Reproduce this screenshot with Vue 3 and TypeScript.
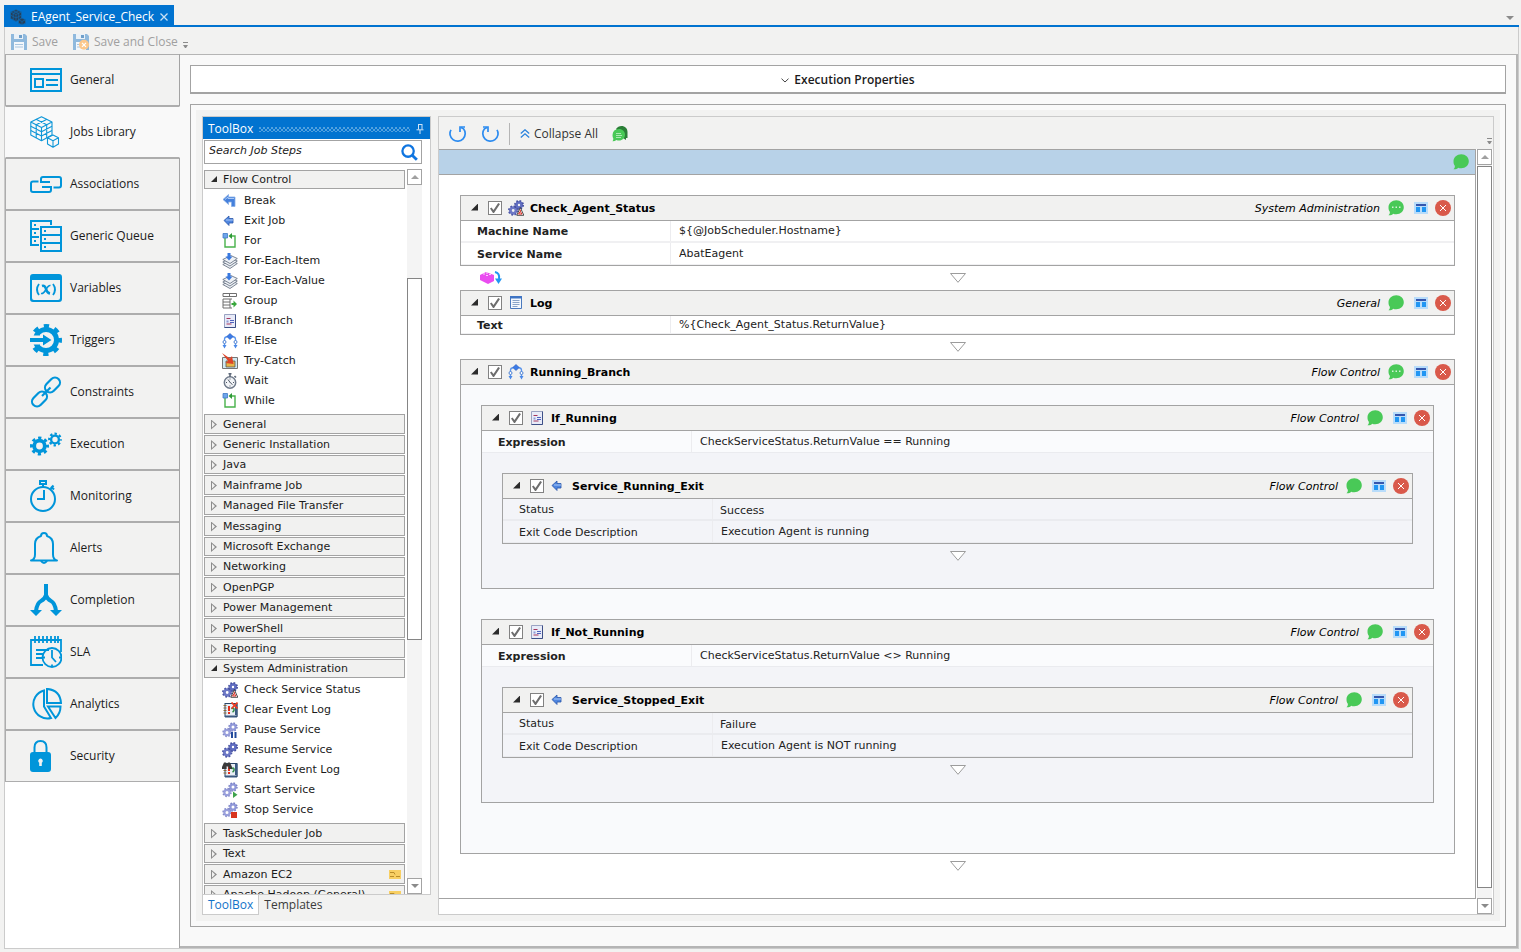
<script setup lang="ts">
import { h, ref, type FunctionalComponent, type VNode } from 'vue'

interface Prop {
  label: string
  value: string
  options?: string[]
}
interface Step {
  name: string
  icon: string
  category: string
  noted?: boolean
  optionalProps?: boolean
  compact?: boolean
  output?: boolean
  props?: Prop[]
  steps?: Step[]
}
interface Group {
  title: string
  licensed?: boolean
  items?: { label: string; icon: string }[]
}

const sections = [
  'General', 'Jobs Library', 'Associations', 'Generic Queue', 'Variables', 'Triggers', 'Constraints',
  'Execution', 'Monitoring', 'Alerts', 'Completion', 'SLA', 'Analytics', 'Security',
]
const current = ref('Jobs Library')
const iconId = (label: string) => '#nav-' + label.toLowerCase().replace(' ', '-')

const groups: Group[] = [
  {
    title: 'Flow Control',
    items: [
      { label: 'Break', icon: 'break' },
      { label: 'Exit Job', icon: 'exit' },
      { label: 'For', icon: 'loop' },
      { label: 'For-Each-Item', icon: 'stack' },
      { label: 'For-Each-Value', icon: 'stack' },
      { label: 'Group', icon: 'group' },
      { label: 'If-Branch', icon: 'ifbranch' },
      { label: 'If-Else', icon: 'ifelse' },
      { label: 'Try-Catch', icon: 'trycatch' },
      { label: 'Wait', icon: 'wait' },
      { label: 'While', icon: 'loop' },
    ],
  },
  { title: 'General' },
  { title: 'Generic Installation' },
  { title: 'Java' },
  { title: 'Mainframe Job' },
  { title: 'Managed File Transfer' },
  { title: 'Messaging' },
  { title: 'Microsoft Exchange' },
  { title: 'Networking' },
  { title: 'OpenPGP' },
  { title: 'Power Management' },
  { title: 'PowerShell' },
  { title: 'Reporting' },
  {
    title: 'System Administration',
    items: [
      { label: 'Check Service Status', icon: 'svc-check' },
      { label: 'Clear Event Log', icon: 'log-clear' },
      { label: 'Pause Service', icon: 'svc-pause' },
      { label: 'Resume Service', icon: 'svc-resume' },
      { label: 'Search Event Log', icon: 'log-search' },
      { label: 'Start Service', icon: 'svc-start' },
      { label: 'Stop Service', icon: 'svc-stop' },
    ],
  },
  { title: 'TaskScheduler Job' },
  { title: 'Text' },
  { title: 'Amazon EC2', licensed: true },
  { title: 'Apache Hadoop (General)', licensed: true },
]

const exitStep = (name: string, status: string, text: string): Step => ({
  name,
  icon: 'exit',
  category: 'Flow Control',
  optionalProps: true,
  props: [
    { label: 'Status', value: status, options: ['Success', 'Failure'] },
    { label: 'Exit Code Description', value: text },
  ],
})

const workflow: Step[] = [
  {
    name: 'Check_Agent_Status',
    icon: 'svc-check',
    category: 'System Administration',
    noted: true,
    output: true,
    props: [
      { label: 'Machine Name', value: '${@JobScheduler.Hostname}' },
      { label: 'Service Name', value: 'AbatEagent' },
    ],
  },
  {
    name: 'Log',
    icon: 'log',
    category: 'General',
    compact: true,
    props: [{ label: 'Text', value: '%{Check_Agent_Status.ReturnValue}' }],
  },
  {
    name: 'Running_Branch',
    icon: 'ifelse',
    category: 'Flow Control',
    noted: true,
    steps: [
      {
        name: 'If_Running',
        icon: 'ifbranch',
        category: 'Flow Control',
        props: [{ label: 'Expression', value: 'CheckServiceStatus.ReturnValue == Running' }],
        steps: [exitStep('Service_Running_Exit', 'Success', 'Execution Agent is running')],
      },
      {
        name: 'If_Not_Running',
        icon: 'ifbranch',
        category: 'Flow Control',
        props: [{ label: 'Expression', value: 'CheckServiceStatus.ReturnValue <> Running' }],
        steps: [exitStep('Service_Stopped_Exit', 'Failure', 'Execution Agent is NOT running')],
      },
    ],
  },
]

const icon = (id: string, size = '0 0 16 16', cls = 'ico'): VNode =>
  h('svg', { class: cls, viewBox: size, 'aria-hidden': 'true' }, [h('use', { href: '#' + id })])

const field = (step: Step, p: Prop): VNode[] => {
  const id = `${step.name}-${p.label}`.replace(/\s/g, '-')
  const editor = p.options
    ? h('select', { id, value: p.value }, p.options.map((o) => h('option', { value: o, selected: o === p.value }, o)))
    : h('input', { id, type: 'text', value: p.value, spellcheck: 'false' })
  return [h('label', { for: id }, p.label), editor]
}

const StepCard: FunctionalComponent<{ step: Step; depth: number }> = ({ step, depth }) =>
  h('section', { class: ['step', 'depth-' + depth] }, [
    h('header', { class: 'step-head' }, [
      h('button', { class: 'fold', type: 'button', 'aria-label': 'Collapse ' + step.name }),
      h('input', { type: 'checkbox', checked: true, 'aria-label': 'Enable ' + step.name }),
      icon(step.icon),
      h('h3', step.name),
      h('em', step.category),
      h('button', { type: 'button', 'aria-label': 'Comments' }, [icon(step.noted ? 'bubble-dots' : 'bubble')]),
      h('button', { class: 'layout', type: 'button', 'aria-label': 'Layout' }, [icon('layout')]),
      h('button', { type: 'button', 'aria-label': 'Delete' }, [icon('remove')]),
    ]),
    step.props &&
      h(
        'div',
        { class: ['props', { compact: step.compact, optional: step.optionalProps }] },
        step.props.map((p) => h('div', { class: 'prop' }, field(step, p))),
      ),
    step.steps &&
      h('div', { class: 'children' }, step.steps.map((s) => [
        h(StepCard, { step: s, depth: depth + 1 }),
        depth === 1 && h('div', { class: 'connector' }, [icon('down', '0 0 18 10', 'down')]),
      ])),
  ])
StepCard.props = ['step', 'depth']
</script>

<template>
  <div class="window">
    <svg class="defs" aria-hidden="true">
      <defs>
        <g id="bluegear">
          <circle cx="5.2" cy="10.5" r="2.800" fill="none" stroke="#6d78c6" stroke-width="2.800" />
          <circle cx="5.2" cy="10.5" r="4.400" fill="none" stroke="#4d58a8" stroke-width="1.600" stroke-dasharray="1.800 1.655" />
          <circle cx="11" cy="5" r="2.600" fill="none" stroke="#5f6cc0" stroke-width="2.800" />
          <circle cx="11" cy="5" r="4.200" fill="none" stroke="#434e9e" stroke-width="1.600" stroke-dasharray="1.700 1.600" />
        </g>
        <g id="palegear">
          <circle cx="5" cy="10.5" r="2.6" fill="none" stroke="#9aa0dc" stroke-width="2.2" />
          <circle cx="5" cy="10.5" r="4" fill="none" stroke="#858ccb" stroke-width="1.4" stroke-dasharray="1.6 1.54" />
          <circle cx="11" cy="5" r="2.6" fill="none" stroke="#8f97d8" stroke-width="2.2" />
          <circle cx="11" cy="5" r="4" fill="none" stroke="#7880c6" stroke-width="1.4" stroke-dasharray="1.6 1.54" />
        </g>
        <g id="book">
          <rect x="3" y="1.500" width="12" height="13" fill="#e9eef5" stroke="#2b4668" />
          <path d="M13 2v12.500h2.500V2zM3 13.500h12v2H3z" fill="#3c5a82" />
          <path d="M1.500 3.500h3M1.500 6h3M1.500 8.500h3M1.500 11h3" stroke="#8a6a3c" />
          <path d="M6 4h2v5H6zM6 10h2v2H6z" fill="#e3301c" />
          <path d="M9.500 7q2-2 2.500 0t-1.500 3" fill="none" stroke="#2f8b45" stroke-width="1.500" />
        </g>
      </defs>

      <symbol id="nav-general" viewBox="0 0 32 32">
        <g fill="none" stroke="#0095da" stroke-width="2"><path d="M1 5h30v22H1zM1 10h30M5 15h8v8H5zM16 16h12M16 21h12" /></g>
      </symbol>
      <symbol id="nav-jobs-library" viewBox="0 0 32 32">
        <g fill="none" stroke="#0f97d8" stroke-width="1.100" stroke-linejoin="round">
          <path d="M11.500.7 22 6v13l-10.500 5.800L.8 19V6zM.8 6l10.700 5.500L22 6M11.500 11.500v13.300" />
          <path d="M6 3.300l10.700 5.500v13.200M17 3.300 6.200 8.800v13.200M.8 10.300l10.700 5.500L22 10.300M.8 14.600l10.700 5.500L22 14.600" />
          <path d="m23 19 5.500 2.700V28L23 31.300 17.500 28v-6.300zM17.500 21.700l5.500 3 5.500-3M23 24.700v6.600" />
        </g>
      </symbol>
      <symbol id="nav-associations" viewBox="0 0 32 32">
        <g fill="none" stroke="#0095da" stroke-width="2"><path d="M8.500 13.500H3q-2 0-2 2V22q0 2 2 2h16q2 0 2-2v-3h-9M23.500 19.500H29q2 0 2-2V11q0-2-2-2H13q-2 0-2 2v3h9" /></g>
      </symbol>
      <symbol id="nav-generic-queue" viewBox="0 0 32 32">
        <g fill="none" stroke="#0095da" stroke-width="2">
          <path d="M21 5V1H1v24h8M1 9h8M1 17h8M11 7h20v24H11zM11 15h20M11 23h20" />
        </g>
        <path d="M4 4h2v2H4zM4 12h2v2H4zM4 20h2v2H4zM14 10h2v2h-2zM14 18h2v2h-2zM14 26h2v2h-2z" fill="#0095da" />
      </symbol>
      <symbol id="nav-variables" viewBox="0 0 32 32">
        <path d="M3 2h26q3 0 3 3v22q0 3-3 3H3q-3 0-3-3V5q0-3 3-3zM2 8v18q0 2 2 2h24q2 0 2-2V8z" fill="#0095da" fill-rule="evenodd" />
        <g fill="none" stroke="#0095da" stroke-width="1.800">
          <path d="M9 12q-4 5.500 0 11M23 12q4 5.500 0 11" />
          <path d="M12 14q3-1 4 3t4 4.500" stroke-width="2.600" /><path d="M20.500 13.500q-2-.5-4.500 4t-5 4" stroke-width="1.600" />
        </g>
      </symbol>
      <symbol id="nav-triggers" viewBox="0 0 32 32">
        <circle cx="16" cy="16" r="13.800" fill="none" stroke="#0095da" stroke-width="4.400" stroke-dasharray="5.200 5.638" stroke-dashoffset="2.600" />
        <circle cx="16" cy="16" r="10.500" fill="none" stroke="#0095da" stroke-width="5" />
        <path d="M0 11.500h9v9H0z" fill="#f2f2f1" />
        <path d="M0 14h13v-3.500l8.500 5.500-8.500 5.500V18H0z" fill="#0095da" />
      </symbol>
      <symbol id="nav-constraints" viewBox="0 0 32 32">
        <g fill="none" stroke="#0095da" stroke-width="2.200">
          <rect x="-7" y="-5" width="17" height="10" rx="5" transform="translate(22.500 9) rotate(-45) translate(-1.500 0)" />
          <rect x="-10" y="-5" width="17" height="10" rx="5" transform="translate(9.500 23) rotate(-45) translate(1.500 0)" />
          <path d="m12 20 8.500-8.500" />
        </g>
      </symbol>
      <symbol id="nav-execution" viewBox="0 0 32 32">
        <g fill="none" stroke="#0095da">
          <circle cx="9.500" cy="18" r="5.300" stroke-width="3.800" /><circle cx="9.500" cy="18" r="8" stroke-width="3" stroke-dasharray="3.200 3.083" stroke-dashoffset="1.600" />
          <circle cx="25" cy="11.500" r="3.900" stroke-width="2.400" /><circle cx="25" cy="11.500" r="5.800" stroke-width="2.200" stroke-dasharray="2.400 2.155" stroke-dashoffset="1.200" />
        </g>
      </symbol>
      <symbol id="nav-monitoring" viewBox="0 0 32 32">
        <g fill="none" stroke="#0095da" stroke-width="2">
          <circle cx="13" cy="19" r="12" /><path d="M10 1h6v3h-6zM13 4v3M14 10v9H7M21 6.500l3 3M20.500 9l3-3.500" />
        </g>
      </symbol>
      <symbol id="nav-alerts" viewBox="0 0 32 32">
        <path d="M1 28.500q4-1 4-6V12q0-6 6-8 0-3 3-3t3 3q6 2 6 8v10.500q0 5 4 6zM11 29q3 4 6 0" fill="none" stroke="#0095da" stroke-width="2" stroke-linejoin="round" />
      </symbol>
      <symbol id="nav-completion" viewBox="0 0 32 32">
        <path d="M16 0v12M16 11q-1 4-5 6t-5 10M16 11q1 4 5 6t5 10" fill="none" stroke="#0095da" stroke-width="4" />
        <path d="M0 26h12l-6 6zM20 26h12l-6 6z" fill="#0095da" />
      </symbol>
      <symbol id="nav-sla" viewBox="0 0 32 32">
        <g fill="none" stroke="#0095da" stroke-width="1.800">
          <path d="M13 29H1V4h30v12M5 0v7M9 0v7M13 0v7M17 0v7M21 0v7M25 0v7M28 0v7M6 14h13M6 18h8M6 22h7" />
          <circle cx="22" cy="21.500" r="9.500" /><path d="M22 14v7.500l4 4.500M22 28.500v2M29 21.500h2M13 21.500h2" />
        </g>
      </symbol>
      <symbol id="nav-analytics" viewBox="0 0 32 32">
        <g fill="none" stroke="#0095da" stroke-width="2">
          <path d="M14 2.500v16l7 11.500A14 14 0 1 1 14 2.500zM17 .9q13 1 14 14.100H17zM18 18.500h12.500q0 7-5 11.500z" />
        </g>
      </symbol>
      <symbol id="nav-security" viewBox="0 0 32 32">
        <path d="M4.500 13V7.500q0-6.500 6-6.500t6 6.500V13" fill="none" stroke="#0095da" stroke-width="2" />
        <rect y="12" width="21" height="20" rx="3" fill="#0095da" />
        <path d="M10.500 18.500a2.400 2.400 0 0 1 1.300 4.300V26h-2.600v-3.200a2.400 2.400 0 0 1 1.300-4.300z" fill="#f2f2f1" />
      </symbol>

      <symbol id="cubes" viewBox="0 0 16 16">
        <g fill="#24405c" stroke="#0f6cb4" stroke-width=".7">
          <path d="M6 .5 11.500 3v6.500L6 12.500.5 9.500V3z" /><path d="m12 9 3.500 1.800v3.400L12 15.800l-3.500-1.600v-3.400z" />
          <path d="M.5 3 6 5.500 11.500 3M6 5.500v7M.5 6.200 6 8.900l5.500-2.700M3.200 1.800l5.500 2.500v6.600M8.700 1.800 3.200 4.300v6.600M8.500 10.800l3.500 1.700 3.500-1.700M12 12.500v3" fill="none" />
        </g>
      </symbol>
      <symbol id="save" viewBox="0 0 16 16">
        <path d="M0 0h14l2 2v14H0z" fill="#8fb9dd" /><path d="M3 0h9v5H3z" fill="#e9f1f8" /><path d="M8 1h3v3H8z" fill="#6f9fca" />
        <path d="M3 8h10v8H3z" fill="#f3f7fb" /><path d="M4 10.500h8M4 13h8" stroke="#a9c6e0" />
      </symbol>
      <symbol id="save-close" viewBox="0 0 16 16">
        <use href="#save" /><circle cx="11" cy="10.800" r="5" fill="#fcc88c" /><path d="m9 8.800 4 4m0-4-4 4" stroke="#fff" stroke-width="1.200" />
      </symbol>

      <symbol id="break" viewBox="0 0 16 16">
        <path d="M1 6.500 6.500 1.500V4H13v9.500H9.500V9h-3v2.500z" fill="#4580dc" stroke="#88aee6" stroke-width=".8" /><path d="M3 6.500 6 4v1.500h6" fill="none" stroke="#a9c8f5" />
      </symbol>
      <symbol id="exit" viewBox="0 0 16 16">
        <path d="M2 7.500 7 3v2.500h4v4.500H7v2.500z" fill="#4f86e0" stroke="#2a55a8" stroke-width=".8" /><path d="M4 7h7" stroke="#a9c8f5" />
      </symbol>
      <symbol id="loop" viewBox="0 0 16 16">
        <path d="M3 5v9h10V3H9" fill="none" stroke="#49b24b" stroke-width="1.400" /><path d="M10 0v6L6.500 3z" fill="#2f9a38" /><path d="M1 .5h4.500V5H1z" fill="#6ea5ea" stroke="#3f78c6" stroke-width=".8" />
      </symbol>
      <symbol id="stack" viewBox="0 0 16 16">
        <g fill="#eef1f5" stroke="#6c7788" stroke-width=".9">
          <path d="m.8 11.500 8-4 6.500 3-7.300 5z" /><path d="m.8 9 8-4 6.500 3-7.300 5z" /><path d="m.8 6.500 8-4 6.500 3-7.300 5z" />
        </g>
        <path d="M5.500 0h3v3.500h2L7 7.500 3.500 3.500h2z" fill="#3979e0" />
      </symbol>
      <symbol id="group" viewBox="0 0 16 16">
        <path d="M1 .5h13.500v3H1zM7.500.5v3M1 6h7v9H1zM1 9h7M1 12h7M8 6h2M8 15h2" fill="#fff" stroke="#6f6f6f" /><path d="M9.500 10h2V7.500l3.500 3.500-3.500 3.500V12h-2z" fill="#39a83c" />
      </symbol>
      <symbol id="ifbranch" viewBox="0 0 16 16">
        <path d="M2.500 1.500h11v13h-11z" fill="#e8ebf8" stroke="#9aa3c2" /><path d="M13.500 1.500v13h-11" fill="none" stroke="#3d4f86" />
        <path d="M4.500 5.500h4M4.500 11h5" stroke="#a5365c" /><path d="M8 7.500h4M8 9.500h4" stroke="#5063c0" stroke-width="1.200" /><path d="M4.500 7.500h2v2h-2z" fill="#8e9ad6" />
      </symbol>
      <symbol id="ifelse" viewBox="0 0 16 16">
        <path d="M2.500 12V6q0-2 3-2.500M13.500 12V6q0-2-3-2.500" fill="none" stroke="#5a95ec" stroke-width="1.300" />
        <path d="m8 .5 3.200 3L8 6.500l-3.200-3z" fill="#3b7be8" stroke="#2458b8" stroke-width=".6" />
        <circle cx="2.500" cy="9" r="1.500" fill="#fff" stroke="#4f83d3" /><circle cx="13.500" cy="9" r="1.500" fill="#fff" stroke="#4f83d3" />
        <path d="M.5 12h4l-2 3.500zM11.500 12h4l-2 3.500z" fill="#4a88e8" />
      </symbol>
      <symbol id="trycatch" viewBox="0 0 16 16">
        <path d="M.5 4.500h15v11H.5z" fill="#cfe9f2" stroke="#757575" /><path d="M4 8h9v6H4z" fill="#e7b64a" stroke="#555" stroke-width=".8" />
        <path d="M0 0 8 5.500 10 3l1.500 8-8-1 2.500-2z" fill="#dd4429" />
      </symbol>
      <symbol id="wait" viewBox="0 0 16 16">
        <circle cx="8" cy="9.500" r="5.700" fill="#f2f4f7" stroke="#6f7a8a" stroke-width="1.500" /><path d="M6.500.8h3M8 1v3M12.500 3l1.500 1.500" stroke="#5d6878" stroke-width="1.600" />
        <path d="M6 6.500 8.500 10l2 1.500M8 5.500v1M8 12.500v1M4 9.500h1M11 9.500h1" fill="none" stroke="#3a4454" stroke-width=".9" />
      </symbol>
      <symbol id="log" viewBox="0 0 16 16">
        <path d="M2.500 1.500h11v12h-11z" fill="#f4f8fd" stroke="#4a79bd" /><path d="M2 1h12v2.500H2z" fill="#3f74c4" /><path d="M4.500 5.500h7M4.500 7.500h7M4.500 9.500h7M4.500 11.500h5" stroke="#8aa4c8" />
      </symbol>
      <symbol id="svc-check" viewBox="0 0 16 16">
        <use href="#bluegear" /><path d="M12.300 7.500 8.800 15.300h7z" fill="#fff" stroke="#222" stroke-width=".8" /><path d="M12.300 9.800v2M10.500 14h3.500l-1.700-2.500z" fill="none" stroke="#d82a20" />
      </symbol>
      <symbol id="svc-resume" viewBox="0 0 16 16"><use href="#bluegear" /></symbol>
      <symbol id="svc-pause" viewBox="0 0 16 16"><use href="#palegear" /><path d="M9 10h2v6H9zM12.500 10h2v6h-2z" fill="#234a9c" /></symbol>
      <symbol id="svc-start" viewBox="0 0 16 16"><use href="#palegear" /><path d="m11 9.500 4.500 3.200L11 16z" fill="#3da24a" /></symbol>
      <symbol id="svc-stop" viewBox="0 0 16 16"><use href="#palegear" /><path d="M9 10h6v6H9z" fill="#d8341d" /></symbol>
      <symbol id="log-clear" viewBox="0 0 16 16"><use href="#book" /><path d="m9.500.5 6 6m0-6-6 6" stroke="#ee3b22" stroke-width="1.700" /></symbol>
      <symbol id="log-search" viewBox="0 0 16 16">
        <use href="#book" /><path d="M0 5 2 .5h2L5 2l1-1.500h2L10 5v2H6.500V4.500h-2V7H0z" fill="#3a3a3a" />
      </symbol>

      <symbol id="bubble" viewBox="0 0 16 16"><path d="M8.300.3c4.300 0 7.500 3 7.500 6.900s-3.200 7-7.500 7c-1.200 0-2.200-.1-3-.5-1.300 1.300-3 1.800-4.800 1.600 1-1 1.600-2.300 1.300-3.600C.8 10.500.5 8.900.5 7.200.5 3.300 4 .3 8.300.3z" fill="#49c957" /></symbol>
      <symbol id="bubble-dots" viewBox="0 0 16 16">
        <use href="#bubble" /><path d="M4 6.500h1.500V8H4zM7.500 6.500H9V8H7.500zM11 6.500h1.500V8H11z" fill="#d4f4d7" />
      </symbol>
      <symbol id="bubbles" viewBox="0 0 16 16">
        <path d="M9.500 0C13 0 15.500 2.500 15.500 6v6h-1.500V14L11 12 4 3Q6 0 9.500 0z" fill="#2b7f37" />
        <path d="M7 3c3.500 0 6 2.500 6 5.700S10.500 14.500 7 14.500q-1.500 0-2.500-.5Q2.500 15.500.5 15.300 1.500 14 1.300 12.500.5 11 .5 9 .8 3 7 3z" fill="#49c957" /><path d="M4 7.500h5M4 9.500h6M4 11.500h5" stroke="#c5efca" stroke-width=".8" />
      </symbol>
      <symbol id="layout" viewBox="0 0 16 16">
        <path d="M1 2h14v12H1z" fill="#b8dcfa" /><path d="M3 4h10v2H3z" fill="#3556ad" /><path d="M3 7h4v5H3zM9 7h4v5H9z" fill="#2196f3" />
      </symbol>
      <symbol id="remove" viewBox="0 0 16 16"><circle cx="8" cy="8" r="8" fill="#d9594a" /><path d="m5 5 6 6m0-6-6 6" stroke="#fff" stroke-width="1" /></symbol>
      <symbol id="down" viewBox="0 0 18 10"><path d="M1.500.5h15L9 9.300z" fill="#fff" stroke="#9c9c9c" /></symbol>
    </svg>

    <header class="tabstrip">
      <div class="doc-tab">
        <svg class="ico"><use href="#cubes" /></svg>
        <span>EAgent_Service_Check</span>
        <button type="button" aria-label="Close tab">
          <svg viewBox="0 0 8 8"><path d="m.5.500 7 7m0-7-7 7" stroke="#c9e0f4" stroke-width="1.300" /></svg>
        </button>
      </div>
      <button class="tab-menu" type="button" aria-label="Open documents"><i class="tri-down"></i></button>
    </header>

    <div class="frame">
      <div class="toolbar">
        <button type="button" disabled><svg class="ico"><use href="#save" /></svg>Save</button>
        <button type="button" disabled><svg class="ico"><use href="#save-close" /></svg>Save and Close</button>
        <i class="overflow"></i>
      </div>

      <div class="body">
        <nav>
          <button
            v-for="s in sections" :key="s" type="button"
            :class="{ selected: s === current }" @click="current = s"
          >
            <svg><use :href="iconId(s)" /></svg>{{ s }}
          </button>
        </nav>

        <main>
          <button class="exec" type="button">
            <svg viewBox="0 0 8 5"><path d="m.5.700 3.500 3.300L7.500.700" fill="none" stroke="#444" /></svg>Execution Properties
          </button>

          <div class="box">
            <div class="workspace">
              <aside>
                <div class="toolbox">
                  <h2>ToolBox<i class="grip"></i>
                    <svg viewBox="0 0 8 10"><path d="M2.500 0v5.500M6 0v5.500M2 .5h4M.5 5.800h7M4 6v4" fill="none" stroke="#cfe3f5" /></svg>
                  </h2>
                  <div class="search">
                    <input type="text" placeholder="Search Job Steps" aria-label="Search Job Steps" />
                    <svg viewBox="0 0 18 18"><circle cx="7.500" cy="7.500" r="6" fill="none" stroke="#0f75e0" stroke-width="2.400" /><path d="m11.800 11.800 5 5" stroke="#0f75e0" stroke-width="3" /></svg>
                  </div>
                  <div class="tree-area">
                    <div class="tree">
                      <div v-for="g in groups" :key="g.title" class="group">
                        <button class="group-head" :class="{ open: g.items }" type="button">
                          <i class="fold-mark"></i>{{ g.title }}
                          <svg v-if="g.licensed" class="card" viewBox="0 0 12 9"><path d="M0 0h12v9H0z" fill="#f8cf63" /><path d="M1 2.500h4l1 2M1 6.500h4M7 6.500h4" fill="none" stroke="#b98d2a" /></svg>
                        </button>
                        <ul v-if="g.items">
                          <li v-for="i in g.items" :key="i.label"><svg class="ico"><use :href="'#' + i.icon" /></svg>{{ i.label }}</li>
                        </ul>
                      </div>
                    </div>
                    <div class="scroll">
                      <button type="button" aria-label="Scroll up"><i class="tri-up"></i></button>
                      <div class="track middle"><div class="thumb"></div></div>
                      <button type="button" aria-label="Scroll down"><i class="tri-down"></i></button>
                    </div>
                  </div>
                </div>
                <div class="side-tabs">
                  <button class="on" type="button">ToolBox</button><button type="button">Templates</button>
                </div>
              </aside>

              <section class="designer">
                <div class="design-tools">
                  <button type="button" aria-label="Undo"><svg viewBox="0 0 18 18"><path d="M2 4.800A7.600 7.600 0 1 0 14.500 3.800L12 2.500" fill="none" stroke="#2d8cf0" stroke-width="1.700" /><path d="M11 7V2H16" fill="none" stroke="#2d8cf0" stroke-width="1.700" /></svg></button>
                  <button type="button" aria-label="Redo"><svg viewBox="0 0 18 18"><path d="M16 4.800A7.600 7.600 0 1 1 3.500 3.800L6 2.500" fill="none" stroke="#2d8cf0" stroke-width="1.700" /><path d="M7 7V2H2" fill="none" stroke="#2d8cf0" stroke-width="1.700" /></svg></button>
                  <i class="divider"></i>
                  <button class="collapse" type="button">
                    <svg viewBox="0 0 10 9"><path d="M.8 4.500 5 .8l4.200 3.700M.8 8.500 5 4.800l4.200 3.700" fill="none" stroke="#2a82dc" stroke-width="1.300" /></svg>Collapse All
                  </button>
                  <button type="button" aria-label="Comments"><svg class="ico"><use href="#bubbles" /></svg></button>
                  <i class="overflow"></i>
                </div>
                <div class="design-area">
                  <div class="sheet">
                    <div class="band"><button type="button" aria-label="Job comments"><svg class="ico"><use href="#bubble" /></svg></button></div>
                    <div class="canvas">
                      <template v-for="s in workflow" :key="s.name">
                        <StepCard :step="s" :depth="0" />
                        <div class="connector">
                          <svg v-if="s.output" class="brick" viewBox="0 0 22 14">
                            <path d="M0 4 6 1l8 3v6l-6 3-8-4z" fill="#ea4cf0" /><path d="M3 3h2M6 2h2M6 4.500h2M9 3.500h2" stroke="#fbd3fc" /><path d="M15 1q5 1 4 7" fill="none" stroke="#2196f3" stroke-width="2" /><path d="M15 7.500h7L18.500 13z" fill="#2196f3" />
                          </svg>
                          <svg class="down"><use href="#down" /></svg>
                        </div>
                      </template>
                    </div>
                  </div>
                  <div class="scroll">
                    <button type="button" aria-label="Scroll up"><i class="tri-up"></i></button>
                    <div class="track top"><div class="thumb"></div></div>
                    <button type="button" aria-label="Scroll down"><i class="tri-down"></i></button>
                  </div>
                </div>
              </section>
            </div>
          </div>
        </main>
      </div>
    </div>
  </div>
</template>

<style>
body {
  margin: 0;
}
</style>

<style scoped>
.window {
  --ui: 'Open Sans', 'Noto Sans', sans-serif;
  --grid: 'DejaVu Sans', sans-serif;
  --line: #a3a3a3;
  --soft: #cbcbcb;
  --face: #f2f2f1;
  box-sizing: border-box;
  display: flex;
  flex-direction: column;
  height: 100vh;
  padding: 5px 2px 3px 4px;
  background: var(--face);
  font: 12px/16px var(--ui);
  color: #1b1b1b;
}
.window *,
.window :deep(*) {
  box-sizing: border-box;
}
.window button,
.window :deep(button) {
  padding: 0;
  border: 0;
  background: none;
  font: inherit;
  color: inherit;
}
.defs {
  position: absolute;
  width: 0;
  height: 0;
}
svg,
.window :deep(svg) {
  display: block;
  flex: none;
}
.ico,
.window :deep(.ico) {
  width: 16px;
  height: 16px;
}
i {
  display: block;
  flex: none;
}
.tri-down {
  border: 4px solid transparent;
  border-top-color: #8b8b8b;
  border-bottom: 0;
}
.tri-up {
  border: 4px solid transparent;
  border-bottom-color: #a0a0a0;
  border-top: 0;
}
.overflow {
  width: 5px;
  height: 6px;
  background: linear-gradient(#8b8b8b, #8b8b8b) 0 0 / 5px 1px no-repeat;
}
.overflow::after {
  content: '';
  display: block;
  margin-top: 3px;
  border: 2px solid transparent;
  border-top: 3px solid #8b8b8b;
  border-bottom: 0;
}

/* document tabs */
.tabstrip {
  display: flex;
  justify-content: space-between;
  flex: none;
  height: 22px;
  border-bottom: 2px solid #0173d0;
}
.doc-tab {
  display: flex;
  align-items: center;
  padding: 3px 6px 0 6px;
  background: #0173d0;
  color: #fff;
}
.doc-tab span {
  margin: 0 6px 0 5px;
}
.doc-tab button svg {
  width: 8px;
  height: 8px;
}
.tab-menu {
  align-self: center;
  margin: 5px 5px 0 0;
}

.frame {
  display: flex;
  flex: 1;
  flex-direction: column;
  min-height: 0;
  border: 1px solid var(--soft);
  border-top: 0;
}
.toolbar {
  display: flex;
  flex: none;
  align-items: center;
  height: 27px;
  padding: 2px 0 0 6px;
  color: #a0a0a0;
}
.toolbar button {
  display: flex;
  align-items: center;
  gap: 5px;
  margin-right: 15px;
}
.toolbar .overflow {
  margin: 6px 0 0 -10px;
}

.body {
  display: flex;
  flex: 1;
  min-height: 0;
}
nav {
  flex: none;
  width: 175px;
  border-right: 1px solid var(--line);
  background: #fff;
}
.window nav button {
  display: flex;
  align-items: center;
  gap: 8px;
  width: 174px;
  height: 52px;
  padding-left: 24px;
  border: 1px solid #adadad;
  border-right: 0;
  background: var(--face);
}
.window nav button.selected {
  width: 175px;
  border-color: #adadad #f9f9f9;
  border-right: 1px solid #f9f9f9;
  background: #f9f9f9;
}
nav svg {
  width: 32px;
  height: 32px;
}

main {
  display: flex;
  flex: 1;
  flex-direction: column;
  gap: 10px;
  min-width: 0;
  padding: 10px 10px 19px;
  border: 1px solid #b5b5b5;
  border-width: 1px 2px 2px 0;
  background: #f9f9f9;
}
.window .exec {
  display: flex;
  flex: none;
  align-items: center;
  justify-content: center;
  gap: 5px;
  height: 29px;
  padding-top: 2px;
  border: 1px solid var(--line);
  border-bottom-width: 2px;
  background: #fff;
  font-weight: 600;
}
.exec svg {
  width: 8px;
  height: 5px;
}
.box {
  display: flex;
  flex: 1;
  min-height: 0;
  padding: 5px;
  border: 1px solid var(--line);
}
.workspace {
  display: flex;
  flex: 1;
  gap: 7px;
  min-width: 0;
  padding: 6px;
  background: var(--face);
}

/* toolbox */
aside {
  display: flex;
  flex: none;
  flex-direction: column;
  width: 229px;
}
.toolbox {
  display: flex;
  flex: 1;
  flex-direction: column;
  min-height: 0;
  border: 1px solid var(--soft);
  background: #fff;
}
h2 {
  display: flex;
  flex: none;
  align-items: center;
  gap: 6px;
  height: 22px;
  margin: 0;
  padding: 2px 6px 0 5px;
  background: #0173d0;
  color: #fff;
  font: 12px/16px var(--ui);
}
.grip {
  flex: 1;
  height: 5px;
  background:
    radial-gradient(circle at 1px 1px, #6fb1e6 0 0.6px, transparent 1px) 0 0 / 4px 4px,
    radial-gradient(circle at 1px 1px, #6fb1e6 0 0.6px, transparent 1px) 2px 2px / 4px 4px;
}
h2 svg {
  width: 8px;
  height: 10px;
}
.search {
  display: flex;
  flex: none;
  align-items: center;
  height: 24px;
  margin: 1px 8px 5px 1px;
  padding-right: 3px;
  border: 1px solid var(--line);
}
.search input {
  flex: 1;
  min-width: 0;
  padding: 0 0 3px 4px;
  border: 0;
  outline: 0;
  font: italic 11px/14px var(--grid);
}
.search input::placeholder {
  color: #1b1b1b;
}
.search svg {
  width: 17px;
  height: 17px;
}
.tree-area {
  display: flex;
  flex: 1;
  gap: 2px;
  min-height: 0;
  padding: 0 8px 0 1px;
}
.tree {
  flex: 1;
  overflow: hidden;
  padding-top: 1px;
  font: 11px/14px var(--grid);
}
.window .group-head {
  display: flex;
  align-items: center;
  width: 100%;
  height: 19px;
  margin-bottom: 1px;
  padding: 1px 3px 0 6px;
  border: 1px solid var(--line);
  background: #f1f1f0;
}
.group:nth-child(5n) .group-head,
.group:nth-child(5n + 2) .group-head {
  height: 20px;
}
.fold-mark {
  width: 6px;
  height: 10px;
  margin-right: 6px;
  background: #8d8d8d;
  clip-path: polygon(0 0, 100% 50%, 0 100%, 0 0, 1px 2px, 1px 8px, 4px 5px, 1px 2px);
}
.open .fold-mark {
  height: 6px;
  margin-bottom: 2px;
  background: #2b2b2b;
  clip-path: polygon(100% 0, 100% 100%, 0 100%);
}
.card {
  width: 12px;
  height: 9px;
  margin-left: auto;
}
ul {
  margin: 0;
  padding: 1px 0 3px 18px;
  list-style: none;
}
li {
  display: flex;
  align-items: center;
  gap: 6px;
  height: 20px;
}
.scroll {
  display: flex;
  flex: none;
  flex-direction: column;
  width: 15px;
  background: #f4f4f4;
}
.window .scroll button {
  display: flex;
  flex: none;
  align-items: center;
  justify-content: center;
  height: 16px;
  border: 1px solid var(--line);
  background: #fff;
}
.track {
  display: grid;
  flex: 1;
}
.track.middle {
  grid-template-rows: 93fr 361fr 238fr;
}
.track.top {
  grid-template-rows: 1fr 722fr 10fr;
}
.thumb {
  grid-row: 2;
  border: 1px solid #858585;
  background: #fff;
}
.side-tabs {
  display: flex;
  flex: none;
  height: 20px;
}
.window .side-tabs button {
  padding: 0 5px;
  color: #3b3b3b;
}
.window .side-tabs .on {
  border: 1px solid var(--soft);
  border-top: 0;
  background: #fff;
  color: #1273c9;
}

/* designer */
.designer {
  display: flex;
  flex: 1;
  flex-direction: column;
  min-width: 0;
  border: 1px solid var(--soft);
  background: #fff;
}
.design-tools {
  display: flex;
  flex: none;
  align-items: center;
  height: 32px;
  padding: 1px 0 0 10px;
  background: var(--face);
  color: #333;
}
.design-tools svg {
  width: 18px;
  height: 18px;
}
.design-tools button + button {
  margin-left: 14px;
}
.divider {
  width: 1px;
  height: 22px;
  margin: 0 10px;
  background: #b5b5b5;
}
.collapse {
  display: flex;
  align-items: center;
  gap: 4px;
}
.design-tools .collapse svg {
  width: 10px;
  height: 9px;
}
.design-tools .overflow {
  align-self: flex-end;
  margin: 0 1px 5px auto;
}
.design-area {
  display: flex;
  flex: 1;
  gap: 1px;
  min-height: 0;
  padding-right: 1px;
}
.sheet {
  display: flex;
  flex: 1;
  flex-direction: column;
  min-width: 0;
  margin-bottom: 15px;
  border: 1px solid var(--line);
  border-left: 0;
}
.band {
  display: flex;
  flex: none;
  align-items: center;
  justify-content: flex-end;
  height: 25px;
  padding-right: 6px;
  border-bottom: 1px solid var(--line);
  background: #b8d2e8;
}
.canvas {
  flex: 1;
  min-height: 0;
  overflow: hidden;
  padding: 20px 20px 20px 21px;
  font: 11px/14px var(--grid);
}
.canvas :deep(.step) {
  border: 1px solid var(--line);
}
.canvas :deep(.step-head) {
  display: flex;
  align-items: center;
  height: 25px;
  padding: 0 3px 0 10px;
  border-bottom: 1px solid var(--line);
  background: #f1f1f0;
  color: #000;
}
.canvas :deep(.fold) {
  width: 7px;
  height: 7px;
  margin: 0 10px 2px 0;
  background: #2b2b2b;
  clip-path: polygon(100% 0, 100% 100%, 0 100%);
}
.canvas :deep(input[type='checkbox']) {
  appearance: none;
  width: 14px;
  height: 14px;
  margin: 0 6px 0 0;
  border: 1px solid #828282;
  background: #fff;
}
.canvas :deep(input[type='checkbox']:checked)::after {
  content: '';
  display: block;
  width: 10px;
  height: 10px;
  margin: 1px;
  background: #6e6e6e;
  clip-path: polygon(0 55%, 15% 45%, 35% 70%, 82% 0, 100% 10%, 40% 100%, 30% 100%);
}
.canvas :deep(h3) {
  flex: 1;
  margin: 0 0 0 6px;
  padding-top: 1px;
  font: bold 11px/14px var(--grid);
}
.canvas :deep(em) {
  margin-right: 8px;
  padding-top: 1px;
}
.canvas :deep(.layout) {
  margin: 0 6px 0 9px;
}
.canvas :deep(.prop) {
  display: grid;
  grid-template-columns: 209px 1fr;
  height: 22px;
  border-bottom: 2px solid #f0f0f2;
}
.canvas :deep(.prop:last-child) {
  border-bottom-width: 1px;
}
.canvas :deep(.compact .prop) {
  height: 18px;
}
.canvas :deep(.prop label) {
  align-self: center;
  padding: 2px 0 0 16px;
  color: #222;
  font-weight: bold;
}
.canvas :deep(.optional label) {
  font-weight: normal;
}
.canvas :deep(.prop input),
.canvas :deep(.prop select) {
  appearance: none;
  min-width: 0;
  margin: 0;
  padding: 0 8px;
  border: 0;
  border-left: 1px solid #ececef;
  border-radius: 0;
  outline: 0;
  background: none;
  color: #222;
  font: 11px/14px var(--grid);
}
.canvas :deep(.prop select) {
  padding: 4px 7px 0;
}
.canvas :deep(.depth-0 > .children) {
  padding: 20px 20px 50px;
  background: #f9fafc;
}
.canvas :deep(.depth-1 > .props) {
  background: #fafbfd;
}
.canvas :deep(.depth-1 + .depth-1) {
  margin-top: 30px;
}
.canvas :deep(.depth-1 > .children) {
  padding: 20px;
  background: #f3f4f8;
}
.canvas :deep(.depth-1 .prop) {
  border-bottom-color: #eaebef;
}
.connector,
.canvas :deep(.connector) {
  display: grid;
  grid-template-columns: 1fr auto 1fr;
  align-items: center;
  height: 24px;
}
.down,
.canvas :deep(.down) {
  grid-column: 2;
  grid-row: 1;
  width: 18px;
  height: 10px;
}
.brick {
  grid-row: 1;
  width: 22px;
  height: 14px;
  margin-left: 20px;
}
</style>
